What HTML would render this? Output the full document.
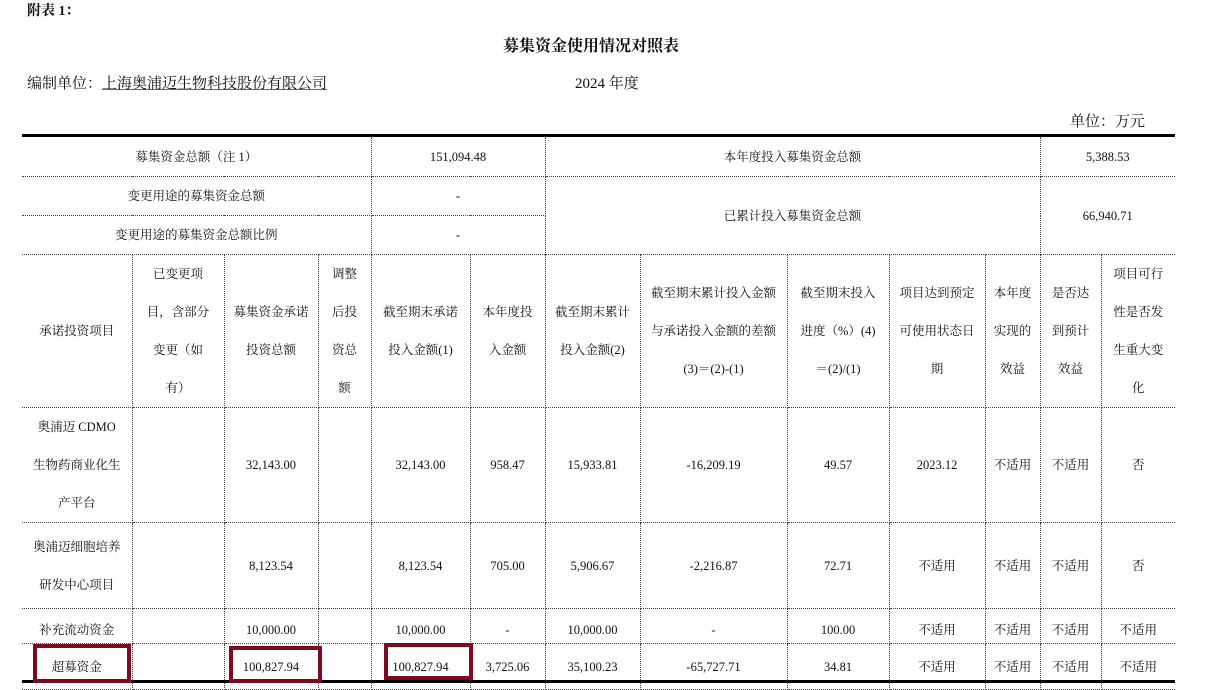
<!DOCTYPE html>
<html><head><meta charset="utf-8"><style>
body{margin:0;width:1229px;height:683px;overflow:hidden;background:#fff;position:relative;font-family:"Liberation Serif","Noto Serif CJK SC","Noto Sans CJK SC",serif;color:#111;}
.a{position:absolute;white-space:nowrap;}
table{position:absolute;left:22px;top:134px;border-collapse:collapse;table-layout:fixed;width:1153px;font-size:12.5px;border-top:3px solid #000;}
td{border:1px dotted #444;text-align:center;vertical-align:middle;padding:0;line-height:38px;overflow:hidden;}
tr>td:first-child{border-left:none}
tr>td:last-child{border-right:none}
.box{position:absolute;border:4px solid #7d0a1f;box-sizing:border-box;}
</style></head><body>
<div class="a" style="left:27px;top:0px;font-size:14px;font-weight:bold;">附表 1：</div>
<div class="a" style="left:503px;top:33px;font-size:16px;font-weight:bold;">募集资金使用情况对照表</div>
<div class="a" style="left:27px;top:72px;font-size:15px;">编制单位：<span style="text-decoration:underline;text-decoration-color:#3a6fc0;">上海奥浦迈生物科技股份有限公司</span></div>
<div class="a" style="left:575px;top:72px;font-size:15px;">2024 年度</div>
<div class="a" style="left:1070px;top:110px;font-size:15px;">单位：万元</div>
<table>
<colgroup><col style="width:110px"><col style="width:92px"><col style="width:94px"><col style="width:53px"><col style="width:99px"><col style="width:75px"><col style="width:95px"><col style="width:147px"><col style="width:102px"><col style="width:96px"><col style="width:55px"><col style="width:61px"><col style="width:74px"></colgroup>
<tr style="height:41px"><td colspan="4">募集资金总额（注 1）</td><td colspan="2">151,094.48</td><td colspan="5">本年度投入募集资金总额</td><td colspan="2">5,388.53</td></tr>
<tr style="height:37px"><td colspan="4">变更用途的募集资金总额</td><td colspan="2">-</td><td colspan="5" rowspan="2">已累计投入募集资金总额</td><td colspan="2" rowspan="2">66,940.71</td></tr>
<tr style="height:39px"><td colspan="4">变更用途的募集资金总额比例</td><td colspan="2">-</td></tr>
<tr style="height:151px"><td>承诺投资项目</td><td>已变更项<br>目，含部分<br>变更（如<br>有）</td><td>募集资金承诺<br>投资总额</td><td>调整<br>后投<br>资总<br>额</td><td>截至期末承诺<br>投入金额(1)</td><td>本年度投<br>入金额</td><td>截至期末累计<br>投入金额(2)</td><td>截至期末累计投入金额<br>与承诺投入金额的差额<br>(3)＝(2)-(1)</td><td>截至期末投入<br>进度（%）(4)<br>＝(2)/(1)</td><td>项目达到预定<br>可使用状态日<br>期</td><td>本年度<br>实现的<br>效益</td><td>是否达<br>到预计<br>效益</td><td>项目可行<br>性是否发<br>生重大变<br>化</td></tr>
<tr style="height:113px"><td>奥浦迈 CDMO<br>生物药商业化生<br>产平台</td><td></td><td>32,143.00</td><td></td><td>32,143.00</td><td>958.47</td><td>15,933.81</td><td>-16,209.19</td><td>49.57</td><td>2023.12</td><td>不适用</td><td>不适用</td><td>否</td></tr>
<tr style="height:86px"><td>奥浦迈细胞培养<br>研发中心项目</td><td></td><td>8,123.54</td><td></td><td>8,123.54</td><td>705.00</td><td>5,906.67</td><td>-2,216.87</td><td>72.71</td><td>不适用</td><td>不适用</td><td>不适用</td><td>否</td></tr>
<tr style="height:35px"><td style="line-height:20px;padding-top:8px">补充流动资金</td><td></td><td style="line-height:20px;padding-top:8px">10,000.00</td><td></td><td style="line-height:20px;padding-top:8px">10,000.00</td><td style="line-height:20px;padding-top:8px">-</td><td style="line-height:20px;padding-top:8px">10,000.00</td><td style="line-height:20px;padding-top:8px">-</td><td style="line-height:20px;padding-top:8px">100.00</td><td style="line-height:20px;padding-top:8px">不适用</td><td style="line-height:20px;padding-top:8px">不适用</td><td style="line-height:20px;padding-top:8px">不适用</td><td style="line-height:20px;padding-top:8px">不适用</td></tr>
<tr style="height:46px"><td>超募资金</td><td></td><td>100,827.94</td><td></td><td>100,827.94</td><td>3,725.06</td><td>35,100.23</td><td>-65,727.71</td><td>34.81</td><td>不适用</td><td>不适用</td><td>不适用</td><td>不适用</td></tr>
</table>
<div class="a" style="left:22px;top:680px;width:1153px;height:3px;background:#000"></div>
<div class="box" style="left:33px;top:644px;width:98px;height:39px;"></div>
<div class="box" style="left:229px;top:646px;width:93px;height:37px;"></div>
<div class="box" style="left:384px;top:643px;width:89px;height:37px;"></div>
</body></html>
